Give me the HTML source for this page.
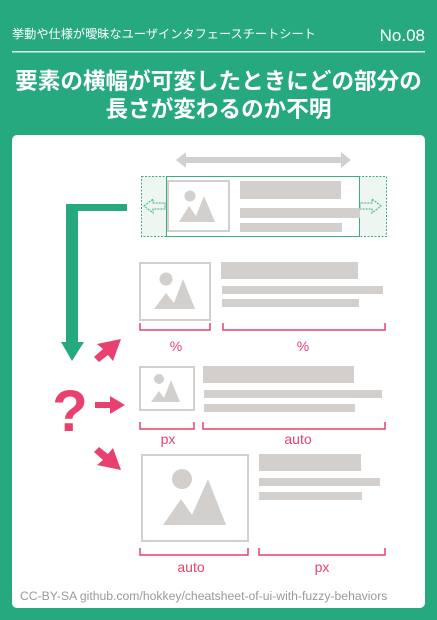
<!DOCTYPE html>
<html><head><meta charset="utf-8"><style>
html,body{margin:0;padding:0;width:437px;height:620px;background:#27a980;overflow:hidden}
svg{display:block}
text{font-family:"Liberation Sans","Noto Sans CJK JP",sans-serif}
</style></head><body>
<svg width="437" height="620" viewBox="0 0 437 620">
<rect width="437" height="620" fill="#27a980"/>
<text x="12" y="38" font-size="12.2" fill="#fff">挙動や仕様が曖昧なユーザインタフェースチートシート</text>
<text x="425" y="41" font-size="17" fill="#fff" text-anchor="end">No.08</text>
<rect x="12" y="51" width="413" height="1.5" fill="#dff3ea"/>
<text x="218.5" y="89" font-size="22.6" font-weight="bold" fill="#fff" text-anchor="middle">要素の横幅が可変したときにどの部分の</text>
<text x="218.5" y="117" font-size="22.6" font-weight="bold" fill="#fff" text-anchor="middle">長さが変わるのか不明</text>
<rect x="12" y="135" width="413" height="473" rx="5" fill="#fff"/>
<polygon points="176,160 186,152 186,157 341,157 341,152 351,160 341,168 341,163 186,163 186,168" fill="#d3cfcc"/>
<rect x="141.5" y="176.5" width="245" height="60" fill="#eef6f2" stroke="#3aae80" stroke-dasharray="2,1.5"/>
<rect x="166.5" y="176.5" width="193" height="60" fill="#fff" stroke="#3aae80"/>
<rect x="168" y="181" width="61" height="50" fill="#fff" stroke="#d3cfcc" stroke-width="2"/>
<circle cx="190" cy="196" r="5.5" fill="#d3cfcc"/>
<polygon points="179,222 189,206 196,216 204,196 215,222" fill="#d3cfcc"/>
<rect x="240" y="181" width="101" height="18" fill="#d3cfcc"/>
<rect x="240" y="208" width="120" height="10" fill="#d3cfcc"/>
<rect x="240" y="223" width="102" height="9" fill="#d3cfcc"/>
<polygon points="144,206 153,199 153,203 165,203 165,209 153,209 153,213" fill="none" stroke="#3aae80" stroke-dasharray="2,1"/>
<polygon points="381,206 372,199 372,203 360,203 360,209 372,209 372,213" fill="none" stroke="#3aae80" stroke-dasharray="2,1"/>
<polygon points="127,204 66,204 66,342 61,342 72,361 84,342 78,342 78,211 127,211" fill="#27a980"/>
<rect x="140" y="263" width="70" height="57" fill="#fff" stroke="#d3cfcc" stroke-width="2"/>
<circle cx="166" cy="279" r="6.5" fill="#d3cfcc"/>
<polygon points="154,309 166,293 174,303 183,279 195,309" fill="#d3cfcc"/>
<rect x="221" y="262" width="137" height="17" fill="#d3cfcc"/>
<rect x="222" y="286" width="161" height="8" fill="#d3cfcc"/>
<rect x="222" y="299" width="137" height="8" fill="#d3cfcc"/>
<path d="M140 323V330H210V323M223 323V330H385V323" fill="none" stroke="#e8416d" stroke-width="1.5"/>
<text x="176" y="351" font-size="14" fill="#e8416d" text-anchor="middle">%</text>
<text x="303" y="351" font-size="14" fill="#e8416d" text-anchor="middle">%</text>
<polygon points="121,339 97,344 103,349 94,357 99,362 108,355 113,361" fill="#e8416d"/>
<text x="70" y="431" font-size="58" font-weight="bold" fill="#e8416d" text-anchor="middle">?</text>
<polygon points="95,402 110,402 110,396 125,405 110,414 110,408 95,408" fill="#e8416d"/>
<polygon points="121,470 97,465 103,460 94,452 99,447 108,454 113,448" fill="#e8416d"/>
<rect x="140" y="367" width="54" height="43" fill="#fff" stroke="#d3cfcc" stroke-width="2"/>
<circle cx="159" cy="379" r="5" fill="#d3cfcc"/>
<polygon points="151,402 159,391 164,398 171,380 180,402" fill="#d3cfcc"/>
<rect x="203" y="366" width="151" height="17" fill="#d3cfcc"/>
<rect x="204" y="390" width="178" height="8" fill="#d3cfcc"/>
<rect x="204" y="404" width="151" height="8" fill="#d3cfcc"/>
<path d="M140 422V429H194V422M203 422V429H385V422" fill="none" stroke="#e8416d" stroke-width="1.5"/>
<text x="168" y="444" font-size="14" fill="#e8416d" text-anchor="middle">px</text>
<text x="298" y="444" font-size="14" fill="#e8416d" text-anchor="middle">auto</text>
<rect x="142" y="455" width="106" height="86" fill="#fff" stroke="#d3cfcc" stroke-width="2"/>
<circle cx="182" cy="479" r="10" fill="#d3cfcc"/>
<polygon points="163,525 181,499 192,515 208,479 226,525" fill="#d3cfcc"/>
<rect x="259" y="454" width="102" height="17" fill="#d3cfcc"/>
<rect x="259" y="478" width="121" height="8" fill="#d3cfcc"/>
<rect x="259" y="492" width="103" height="8" fill="#d3cfcc"/>
<path d="M140 548V555H248V548M259 548V555H385V548" fill="none" stroke="#e8416d" stroke-width="1.5"/>
<text x="191" y="572" font-size="14" fill="#e8416d" text-anchor="middle">auto</text>
<text x="322" y="572" font-size="14" fill="#e8416d" text-anchor="middle">px</text>
<text x="20" y="600" font-size="12.2" fill="#999">CC-BY-SA github.com/hokkey/cheatsheet-of-ui-with-fuzzy-behaviors</text>
</svg>
</body></html>
